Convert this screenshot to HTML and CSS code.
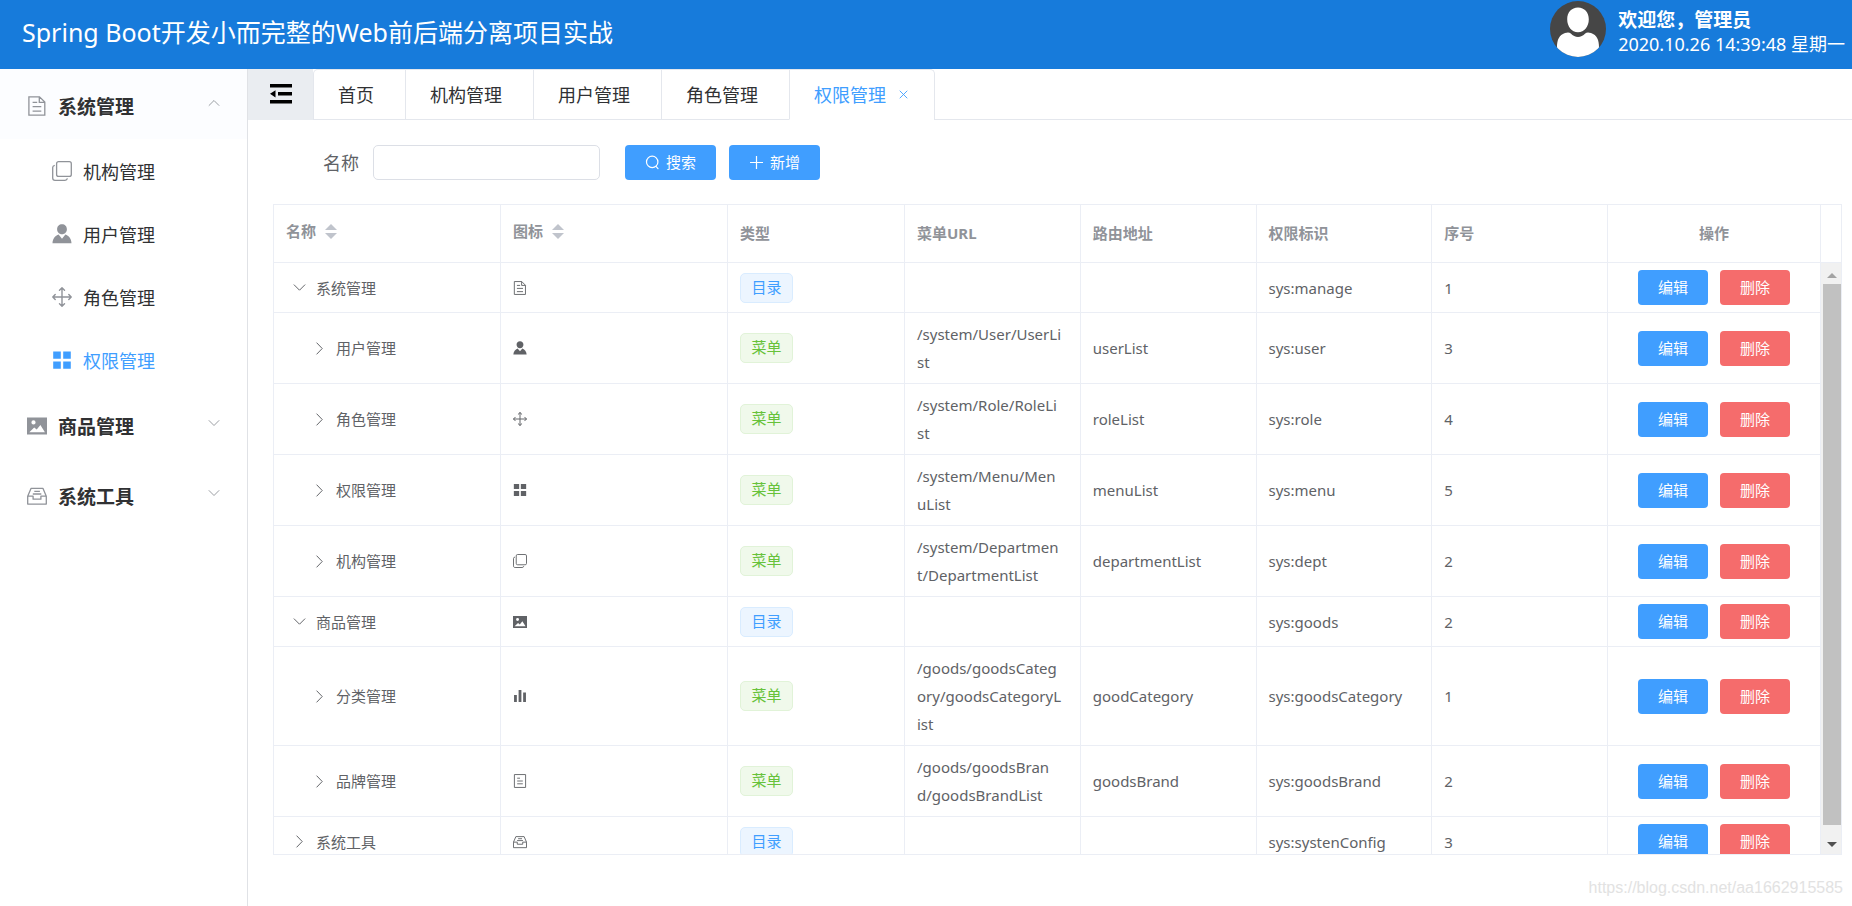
FILE: index.html
```html
<!DOCTYPE html>
<html lang="zh-CN">
<head>
<meta charset="utf-8">
<title>权限管理</title>
<link rel="stylesheet" href="styles.css">
</head>
<body>
<svg class="sprite" aria-hidden="true">
  <symbol id="i-document" viewBox="0 0 20 20"><path fill="none" stroke="currentColor" stroke-width="1.3" d="M1.9.8h10.6l5.3 5.3v13.1H1.9zM12.3.8v5.5h5.5M5.6 6.3h4.6M5.6 10.6h8.7M5.6 15.2h8.7"/></symbol>
  <symbol id="i-copy" viewBox="0 0 20 20"><g fill="none" stroke="currentColor" stroke-width="1.3"><rect x="4.6" y=".7" width="14.7" height="14.7" rx="2"/><path d="M2.8 4.4C1.400 4.600.7 5.300.7 6.600V17c0 1.500.8 2.300 2.300 2.300h10c1.300 0 2.100-.6 2.400-1.900"/></g></symbol>
  <symbol id="i-user" viewBox="0 0 20 20"><path fill="currentColor" d="M10 .3c2.900 0 4.900 2.100 4.900 4.900S12.900 10.200 10 10.200 5.100 8 5.100 5.200 7.100.3 10 .3zM6.600 10.600 10 14.800l3.400-4.200c3.400 1.300 5.900 4.100 6.100 8.700H.5c.2-4.600 2.700-7.400 6.100-8.700z"/></symbol>
  <symbol id="i-rank" viewBox="0 0 20 20"><path fill="none" stroke="currentColor" stroke-width="1.4" stroke-linecap="round" stroke-linejoin="round" d="M10 .9v18.200M.9 10h18.200M7.500 3.200 10 .8l2.500 2.400M7.500 16.800 10 19.200l2.500-2.400M3.200 7.500.8 10l2.400 2.500M16.800 7.500 19.200 10l-2.400 2.500"/></symbol>
  <symbol id="i-grid" viewBox="0 0 20 20"><path fill="currentColor" d="M1.200 1.500h7.600v7.200H1.200zM11.200 1.500h7.600v7.200h-7.600zM1.200 11.500h7.600v7.200H1.200zM11.200 11.500h7.600v7.200h-7.600z"/></symbol>
  <symbol id="i-picture" viewBox="0 0 20 20"><path fill="currentColor" fill-rule="evenodd" d="M0 1.600h20v17H0zM6.500 4.300a2.100 2.100 0 1 0 0 4.200 2.100 2.100 0 0 0 0-4.200zM2.300 16.200h15.600l-4.500-7.200-3.700 4.600-2.500-2.200z"/></symbol>
  <symbol id="i-box" viewBox="0 0 20 20"><path fill="none" stroke="currentColor" stroke-width="1.300" stroke-linejoin="round" d="M.7 10.200 4.100 2.300h11.800l3.400 7.900v7.900H.7zM.7 10.200h5.400v3h7.800v-3h5.400M7.300 5.300h5.600M5.800 8h8.500"/></symbol>
  <symbol id="i-tickets" viewBox="0 0 20 20"><path fill="none" stroke="currentColor" stroke-width="1.300" d="M2 .8h16v18.400H2zM6 6h4M6 10h8M6 14h8"/></symbol>
  <symbol id="i-data" viewBox="0 0 20 20"><path fill="currentColor" d="M1.500 8.500h4v10h-4zM8 1.500h4v17H8zM14.500 5h4v13.500h-4z"/></symbol>
  <symbol id="i-down" viewBox="0 0 12 12"><path fill="none" stroke="currentColor" stroke-width=".9" d="m.8 3.300 5.200 5.200 5.200-5.200"/></symbol>
  <symbol id="i-up" viewBox="0 0 12 12"><path fill="none" stroke="currentColor" stroke-width=".9" d="M.8 8.700 6 3.500l5.200 5.200"/></symbol>
  <symbol id="i-right" viewBox="0 0 12 12"><path fill="none" stroke="currentColor" stroke-width=".9" d="M3.300.6 8.500 6l-5.200 5.400"/></symbol>
  <symbol id="i-close" viewBox="0 0 10 10"><path fill="none" stroke="currentColor" stroke-width="1" d="m.8.8 8.400 8.400M9.200.8.8 9.200"/></symbol>
  <symbol id="i-search" viewBox="0 0 15 15"><path fill="none" stroke="currentColor" stroke-width="1.200" stroke-linecap="round" d="M7.200 1.200a5.700 5.700 0 1 1 0 11.400 5.700 5.700 0 0 1 0-11.400zM11 11.400l2 2.200"/></symbol>
  <symbol id="i-plus" viewBox="0 0 15 15"><path fill="none" stroke="currentColor" stroke-width="1.200" d="M7.500 1v13M1 7.500h13"/></symbol>
  <symbol id="i-fold" viewBox="0 0 24 20"><path d="M1 0h22v3.500H1zM9 8h14v3.500H9zM1 16h22v3.500H1zM1 9.800l5.500-3.600v7.200z"/></symbol>
</svg>

<header class="header">
  <h1 class="title">Spring Boot开发小而完整的Web前后端分离项目实战</h1>
  <div class="profile">
    <svg class="avatar" viewBox="0 0 56 56" role="img" aria-label="头像"><defs><clipPath id="round"><circle cx="28" cy="28" r="28"/></clipPath></defs><g clip-path="url(#round)"><path fill="#464646" d="M0 0h56v56H0z"/><path fill="#fff" d="M28 6.500c6.500 0 10.800 5 10.800 11.800 0 7.300-4.400 13-10.800 13s-10.800-5.700-10.800-13C17.200 11.500 21.500 6.500 28 6.500zM7 46c0-7 2-12 8-14 2.500-.8 4.500-.8 5.800.5 4 4.500 10.400 4.500 14.400 0C36.500 31.200 38.500 31.200 41 32c6 2 8 7 8 14v10H7z"/></g></svg>
    <div>
      <strong class="welcome">欢迎您，管理员</strong>
      <div class="clock">2020.10.26 14:39:48 星期一</div>
    </div>
  </div>
</header>

<div class="layout">
  <nav class="sidebar">
    <button class="group active" type="button"><svg class="icon"><use href="#i-document"/></svg><span>系统管理</span><svg class="chevron"><use href="#i-up"/></svg></button>
    <a class="item" href="#dept"><svg class="icon"><use href="#i-copy"/></svg><span>机构管理</span></a>
    <a class="item" href="#user"><svg class="icon"><use href="#i-user"/></svg><span>用户管理</span></a>
    <a class="item" href="#role"><svg class="icon"><use href="#i-rank"/></svg><span>角色管理</span></a>
    <a class="item current" href="#menu"><svg class="icon"><use href="#i-grid"/></svg><span>权限管理</span></a>
    <button class="group" type="button"><svg class="icon"><use href="#i-picture"/></svg><span>商品管理</span><svg class="chevron"><use href="#i-down"/></svg></button>
    <button class="group" type="button"><svg class="icon"><use href="#i-box"/></svg><span>系统工具</span><svg class="chevron"><use href="#i-down"/></svg></button>
  </nav>

  <main class="main">
    <div class="tabbar">
      <button class="fold" type="button" aria-label="折叠菜单"><svg><use href="#i-fold"/></svg></button>
      <div class="tabs">
        <div class="tab"><a href="#home">首页</a></div>
        <div class="tab"><a href="#dept">机构管理</a></div>
        <div class="tab"><a href="#user">用户管理</a></div>
        <div class="tab"><a href="#role">角色管理</a></div>
        <div class="tab current"><a href="#menu">权限管理</a><button class="close" type="button" aria-label="关闭"><svg><use href="#i-close"/></svg></button></div>
      </div>
    </div>

    <form class="search">
      <label for="name">名称</label>
      <input id="name" type="text">
      <button class="btn primary" type="button"><svg><use href="#i-search"/></svg>搜索</button>
      <button class="btn primary" type="button"><svg><use href="#i-plus"/></svg>新增</button>
    </form>

    <section class="grid">
      <table class="table head">
        <colgroup><col class="c-name"><col class="c-name"><col class="c-type"><col><col><col><col><col class="c-ops"><col class="c-gutter"></colgroup>
        <thead><tr>
          <th><span class="sortable">名称<span class="carets"></span></span></th>
          <th><span class="sortable">图标<span class="carets"></span></span></th>
          <th>类型</th><th>菜单URL</th><th>路由地址</th><th>权限标识</th><th>序号</th><th class="center">操作</th><th class="gutter"></th>
        </tr></thead>
      </table>
      <div class="body">
        <div class="scroller">
        <table class="table">
          <colgroup><col class="c-name"><col class="c-name"><col class="c-type"><col><col><col><col><col class="c-ops"></colgroup>
          <tbody>
            <tr><td><div class="node"><button class="toggle" type="button" aria-label="收起"><svg><use href="#i-down"/></svg></button>系统管理</div></td><td><svg class="mini"><use href="#i-document"/></svg></td><td><span class="tag dir">目录</span></td><td></td><td></td><td>sys:manage</td><td>1</td><td class="ops"><div class="pair"><button class="btn primary" type="button">编辑</button><button class="btn danger" type="button">删除</button></div></td></tr>
            <tr><td><div class="node child"><button class="toggle" type="button" aria-label="展开"><svg><use href="#i-right"/></svg></button>用户管理</div></td><td><svg class="mini"><use href="#i-user"/></svg></td><td><span class="tag menu">菜单</span></td><td>/system/User/UserLi<br>st</td><td>userList</td><td>sys:user</td><td>3</td><td class="ops"><div class="pair"><button class="btn primary" type="button">编辑</button><button class="btn danger" type="button">删除</button></div></td></tr>
            <tr><td><div class="node child"><button class="toggle" type="button" aria-label="展开"><svg><use href="#i-right"/></svg></button>角色管理</div></td><td><svg class="mini"><use href="#i-rank"/></svg></td><td><span class="tag menu">菜单</span></td><td>/system/Role/RoleLi<br>st</td><td>roleList</td><td>sys:role</td><td>4</td><td class="ops"><div class="pair"><button class="btn primary" type="button">编辑</button><button class="btn danger" type="button">删除</button></div></td></tr>
            <tr><td><div class="node child"><button class="toggle" type="button" aria-label="展开"><svg><use href="#i-right"/></svg></button>权限管理</div></td><td><svg class="mini"><use href="#i-grid"/></svg></td><td><span class="tag menu">菜单</span></td><td>/system/Menu/Men<br>uList</td><td>menuList</td><td>sys:menu</td><td>5</td><td class="ops"><div class="pair"><button class="btn primary" type="button">编辑</button><button class="btn danger" type="button">删除</button></div></td></tr>
            <tr><td><div class="node child"><button class="toggle" type="button" aria-label="展开"><svg><use href="#i-right"/></svg></button>机构管理</div></td><td><svg class="mini"><use href="#i-copy"/></svg></td><td><span class="tag menu">菜单</span></td><td>/system/Departmen<br>t/DepartmentList</td><td>departmentList</td><td>sys:dept</td><td>2</td><td class="ops"><div class="pair"><button class="btn primary" type="button">编辑</button><button class="btn danger" type="button">删除</button></div></td></tr>
            <tr><td><div class="node"><button class="toggle" type="button" aria-label="收起"><svg><use href="#i-down"/></svg></button>商品管理</div></td><td><svg class="mini"><use href="#i-picture"/></svg></td><td><span class="tag dir">目录</span></td><td></td><td></td><td>sys:goods</td><td>2</td><td class="ops"><div class="pair"><button class="btn primary" type="button">编辑</button><button class="btn danger" type="button">删除</button></div></td></tr>
            <tr><td><div class="node child"><button class="toggle" type="button" aria-label="展开"><svg><use href="#i-right"/></svg></button>分类管理</div></td><td><svg class="mini"><use href="#i-data"/></svg></td><td><span class="tag menu">菜单</span></td><td>/goods/goodsCateg<br>ory/goodsCategoryL<br>ist</td><td>goodCategory</td><td>sys:goodsCategory</td><td>1</td><td class="ops"><div class="pair"><button class="btn primary" type="button">编辑</button><button class="btn danger" type="button">删除</button></div></td></tr>
            <tr><td><div class="node child"><button class="toggle" type="button" aria-label="展开"><svg><use href="#i-right"/></svg></button>品牌管理</div></td><td><svg class="mini"><use href="#i-tickets"/></svg></td><td><span class="tag menu">菜单</span></td><td>/goods/goodsBran<br>d/goodsBrandList</td><td>goodsBrand</td><td>sys:goodsBrand</td><td>2</td><td class="ops"><div class="pair"><button class="btn primary" type="button">编辑</button><button class="btn danger" type="button">删除</button></div></td></tr>
            <tr><td><div class="node"><button class="toggle" type="button" aria-label="展开"><svg><use href="#i-right"/></svg></button>系统工具</div></td><td><svg class="mini"><use href="#i-box"/></svg></td><td><span class="tag dir">目录</span></td><td></td><td></td><td>sys:systenConfig</td><td>3</td><td class="ops"><div class="pair"><button class="btn primary" type="button">编辑</button><button class="btn danger" type="button">删除</button></div></td></tr>
          </tbody>
        </table>
        </div>
        <div class="scrollbar" aria-hidden="true"><span class="arrow up"></span><span class="thumb"></span><span class="arrow down"></span></div>
      </div>
    </section>
  </main>
</div>
<div class="watermark">https://blog.csdn.net/aa1662915585</div>
</body>
</html>
```
FILE: styles.css
```css
* { box-sizing: border-box; }

body {
  margin: 0;
  height: 100vh;
  display: flex;
  flex-direction: column;
  overflow: hidden;
  background: #fff;
  color: #606266;
  font: 15px/28px "Noto Sans", "Noto Sans CJK SC", sans-serif;
}

button, input { font: inherit; color: inherit; }
button { border: 0; padding: 0; background: none; cursor: pointer; }
a { color: inherit; text-decoration: none; }
svg { display: block; flex: none; }
.sprite { position: absolute; width: 0; height: 0; }

/* Header */
.header {
  flex: none;
  height: 69px;
  padding: 0 7px 0 22px;
  display: flex;
  justify-content: space-between;
  background: #177bdb;
  color: #fff;
}
.title { margin: 0; font-size: 25px; font-weight: 400; line-height: 64px; }
.profile { display: flex; gap: 12px; padding-top: 1px; }
.avatar { width: 56px; height: 56px; }
.welcome { display: block; font-size: 19px; line-height: 23px; padding-top: 8px; }
.clock { font-size: 18px; line-height: 24px; }

/* Sidebar */
.layout { flex: 1; min-height: 0; display: flex; }
.sidebar {
  flex: none;
  width: 248px;
  border-right: 1px solid #e0e2e6;
  color: #303133;
}
.group, .item { display: flex; align-items: center; width: 100%; text-align: left; }
.group { height: 70px; padding: 2px 27px 0; gap: 11px; font-size: 19px; font-weight: 700; }
.group.active { padding-top: 6px; background: #fcfdff; }
.group span { flex: 1; }
.item { height: 63px; padding: 3px 27px 0 52px; gap: 11px; font-size: 18px; }
.icon { width: 20px; height: 20px; margin-bottom: 3px; color: #909399; }
.chevron { width: 12px; height: 12px; color: #909399; margin-bottom: 8px; }
.item.current, .item.current .icon { color: #409eff; }

/* Tabs */
.main { flex: 1; min-width: 0; display: flex; flex-direction: column; padding-bottom: 51px; }
.tabbar { flex: none; display: flex; height: 51px; border-bottom: 1px solid #e4e7ed; }
.fold {
  width: 65px;
  height: 51px;
  padding-bottom: 2px;
  display: grid;
  place-items: center;
  background: #eaedf1;
  color: #000;
}
.fold svg { width: 24px; height: 20px; }
.tabs {
  display: flex;
  height: 51px;
  border: 1px solid #e4e7ed;
  border-bottom: 0;
  border-radius: 5px 5px 0 0;
}
.tab {
  display: flex;
  align-items: center;
  gap: 13px;
  padding: 0 31px 0 24px;
  border-bottom: 1px solid #e4e7ed;
  color: #303133;
  font-size: 18px;
}
.tab + .tab { border-left: 1px solid #e4e7ed; }
.tab.current { padding-right: 26px; color: #409eff; border-bottom-color: #fff; }
.close svg { width: 9px; height: 9px; }

/* Search form */
.search { flex: none; display: flex; align-items: center; padding: 25px 0 24px 75px; }
.search label { font-size: 18px; padding-right: 14px; }
.search input {
  width: 227px;
  height: 35px;
  margin-right: 25px;
  padding: 0 15px;
  border: 1px solid #dcdfe6;
  border-radius: 5px;
  background: #fff;
}
.search .btn { width: 91px; margin-right: 13px; }
.btn {
  display: flex;
  align-items: center;
  justify-content: center;
  gap: 6px;
  width: 70px;
  height: 35px;
  padding-bottom: 1px;
  border-radius: 4px;
  color: #fff;
}
.btn svg { width: 15px; height: 15px; }
.primary { background: #409eff; }
.danger { background: #f56c6c; }

/* Permission table */
.grid {
  flex: 1;
  min-height: 0;
  display: flex;
  flex-direction: column;
  margin: 0 10px 0 25px;
  border: 1px solid #ebeef5;
}
.table { width: 100%; table-layout: fixed; border-collapse: separate; border-spacing: 0; }
.c-name { width: 227px; }
.c-type { width: 177px; }
.c-ops { width: 213px; }
.c-gutter { width: 20px; }
.table th, .table td {
  padding: 7px 12px;
  border-right: 1px solid #ebeef5;
  border-bottom: 1px solid #ebeef5;
  text-align: left;
  vertical-align: middle;
  word-break: break-all;
}
.table th { height: 58px; padding-bottom: 9px; color: #909399; font-weight: 700; }
.table th.center { text-align: center; }
.table th.gutter { border-right: 0; }
.table td { height: 50px; }
.sortable { display: flex; align-items: center; gap: 9px; padding-bottom: 3px; }
.carets { display: grid; gap: 3px; }
.carets::before, .carets::after { content: ""; border: 6px solid transparent; }
.carets::before { border-top: 0; border-bottom-color: #c0c4cc; }
.carets::after { border-bottom: 0; border-top-color: #c0c4cc; }
.body { flex: 1; min-height: 0; display: flex; }
.scroller { flex: 1; min-width: 0; overflow: hidden; }
.node { display: flex; align-items: center; gap: 10px; padding-left: 7px; }
.node.child { padding-left: 27px; }
.toggle svg { width: 13px; height: 13px; }
.mini { width: 14px; height: 14px; }
.tag {
  display: block;
  width: 53px;
  height: 30px;
  border: 1px solid;
  border-radius: 5px;
  line-height: 26px;
  text-align: center;
}
.dir { color: #409eff; background: #ecf5ff; border-color: #d9ecff; }
.menu { color: #67c23a; background: #f0f9eb; border-color: #e1f3d8; }
.pair { display: flex; justify-content: center; gap: 12px; }

/* Scrollbar track */
.scrollbar {
  flex: none;
  width: 20px;
  display: flex;
  flex-direction: column;
  align-items: flex-end;
  background: #f1f1f1;
}
.thumb { flex: 1; width: 18px; background: #c1c1c1; }
.arrow { display: grid; place-items: center; width: 18px; height: 21px; padding-top: 4px; }
.arrow.down { height: 29px; padding-top: 9px; }
.arrow::before { content: ""; border: 5px solid transparent; }
.arrow.up::before { border-top: 0; border-bottom-color: #a3a3a3; }
.arrow.down::before { border-bottom: 0; border-top-color: #505050; }

.watermark {
  position: absolute;
  right: 9px;
  bottom: 7px;
  color: #e2e2e2;
  font: 16px/22px "Liberation Sans", sans-serif;
}
```
